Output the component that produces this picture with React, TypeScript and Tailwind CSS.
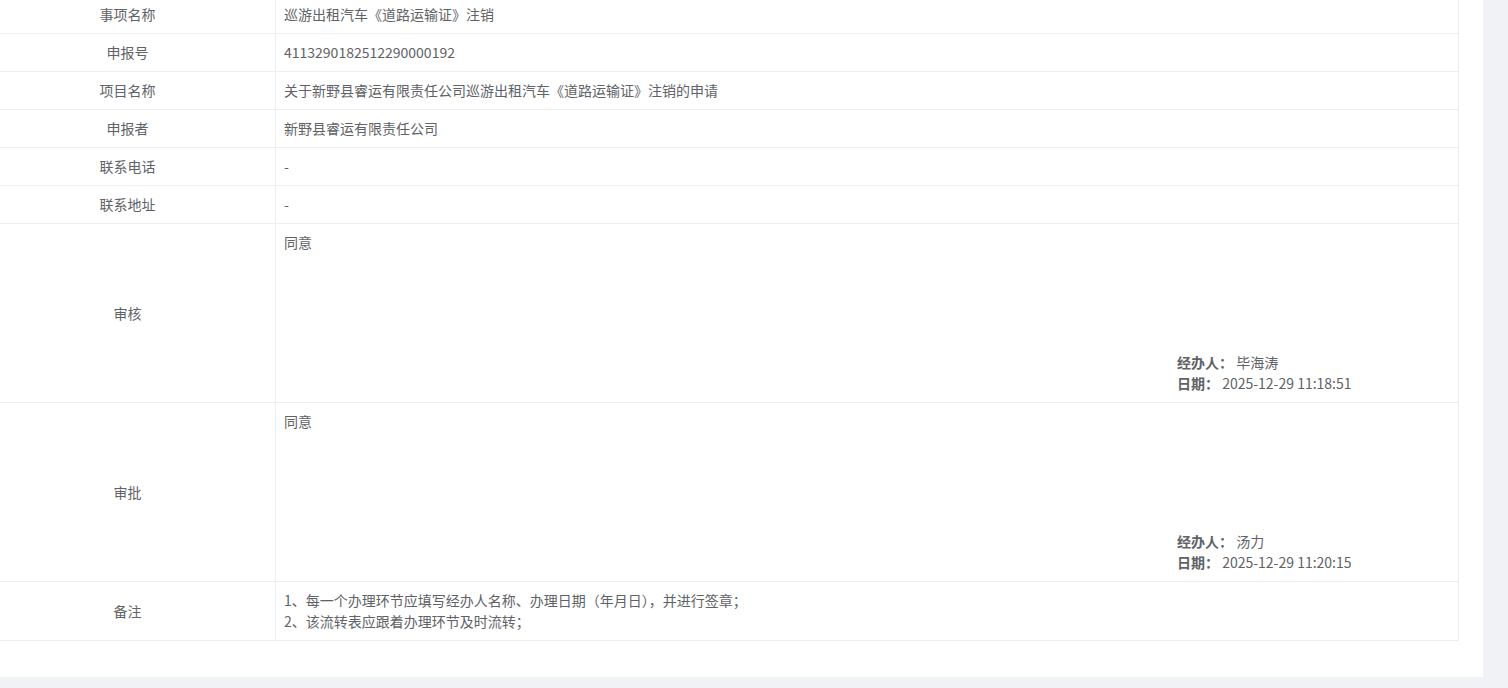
import React from "react";

const font = {
  fontFamily: '"Microsoft YaHei", "Noto Sans CJK SC", sans-serif',
};

type Row = { label: string; value: string };

const simpleRows: Row[] = [
  { label: "事项名称", value: "巡游出租汽车《道路运输证》注销" },
  { label: "申报号", value: "4113290182512290000192" },
  { label: "项目名称", value: "关于新野县睿运有限责任公司巡游出租汽车《道路运输证》注销的申请" },
  { label: "申报者", value: "新野县睿运有限责任公司" },
  { label: "联系电话", value: "-" },
  { label: "联系地址", value: "-" },
];

function SimpleRow({ label, value }: Row) {
  return (
    <div className="flex h-[38px] border-b border-[#ebeef5]">
      <div className="flex w-[296px] shrink-0 items-center justify-center border-r border-[#ebeef5]">
        {label}
      </div>
      <div className="flex flex-1 items-center px-[8px]">{value}</div>
    </div>
  );
}

function ApprovalRow({
  label,
  opinion,
  person,
  date,
}: {
  label: string;
  opinion: string;
  person: string;
  date: string;
}) {
  return (
    <div className="flex h-[179px] border-b border-[#ebeef5]">
      <div className="flex w-[296px] shrink-0 items-center justify-center border-r border-[#ebeef5]">
        {label}
      </div>
      <div className="flex flex-1 flex-col justify-between px-[8px] py-[8px]">
        <div>{opinion}</div>
        <div className="flex justify-end pr-[3px]">
          <div className="w-[270px]">
            <div>
              <span className="font-bold">经办人：</span> {person}
            </div>
            <div>
              <span className="font-bold">日期：</span> {date}
            </div>
          </div>
        </div>
      </div>
    </div>
  );
}

export default function App() {
  return (
    <div
      className="h-[688px] w-[1508px] overflow-hidden bg-[#f0f2f5] text-[14px] leading-[21px] text-[#606266]"
      style={font}
    >
      <div className="h-[677px] w-[1483px] overflow-hidden bg-white">
        <div className="-ml-[20px] -mt-[4px] w-[1479px] border-r border-[#ebeef5]">
          {simpleRows.map((r) => (
            <SimpleRow key={r.label} {...r} />
          ))}
          <ApprovalRow label="审核" opinion="同意" person="毕海涛" date="2025-12-29 11:18:51" />
          <ApprovalRow label="审批" opinion="同意" person="汤力" date="2025-12-29 11:20:15" />
          <div className="flex h-[59px] border-b border-[#ebeef5]">
            <div className="flex w-[296px] shrink-0 items-center justify-center border-r border-[#ebeef5]">
              备注
            </div>
            <div className="flex flex-1 flex-col justify-center px-[8px]">
              <div>1、每一个办理环节应填写经办人名称、办理日期（年月日），并进行签章；</div>
              <div>2、该流转表应跟着办理环节及时流转；</div>
            </div>
          </div>
        </div>
      </div>
    </div>
  );
}
